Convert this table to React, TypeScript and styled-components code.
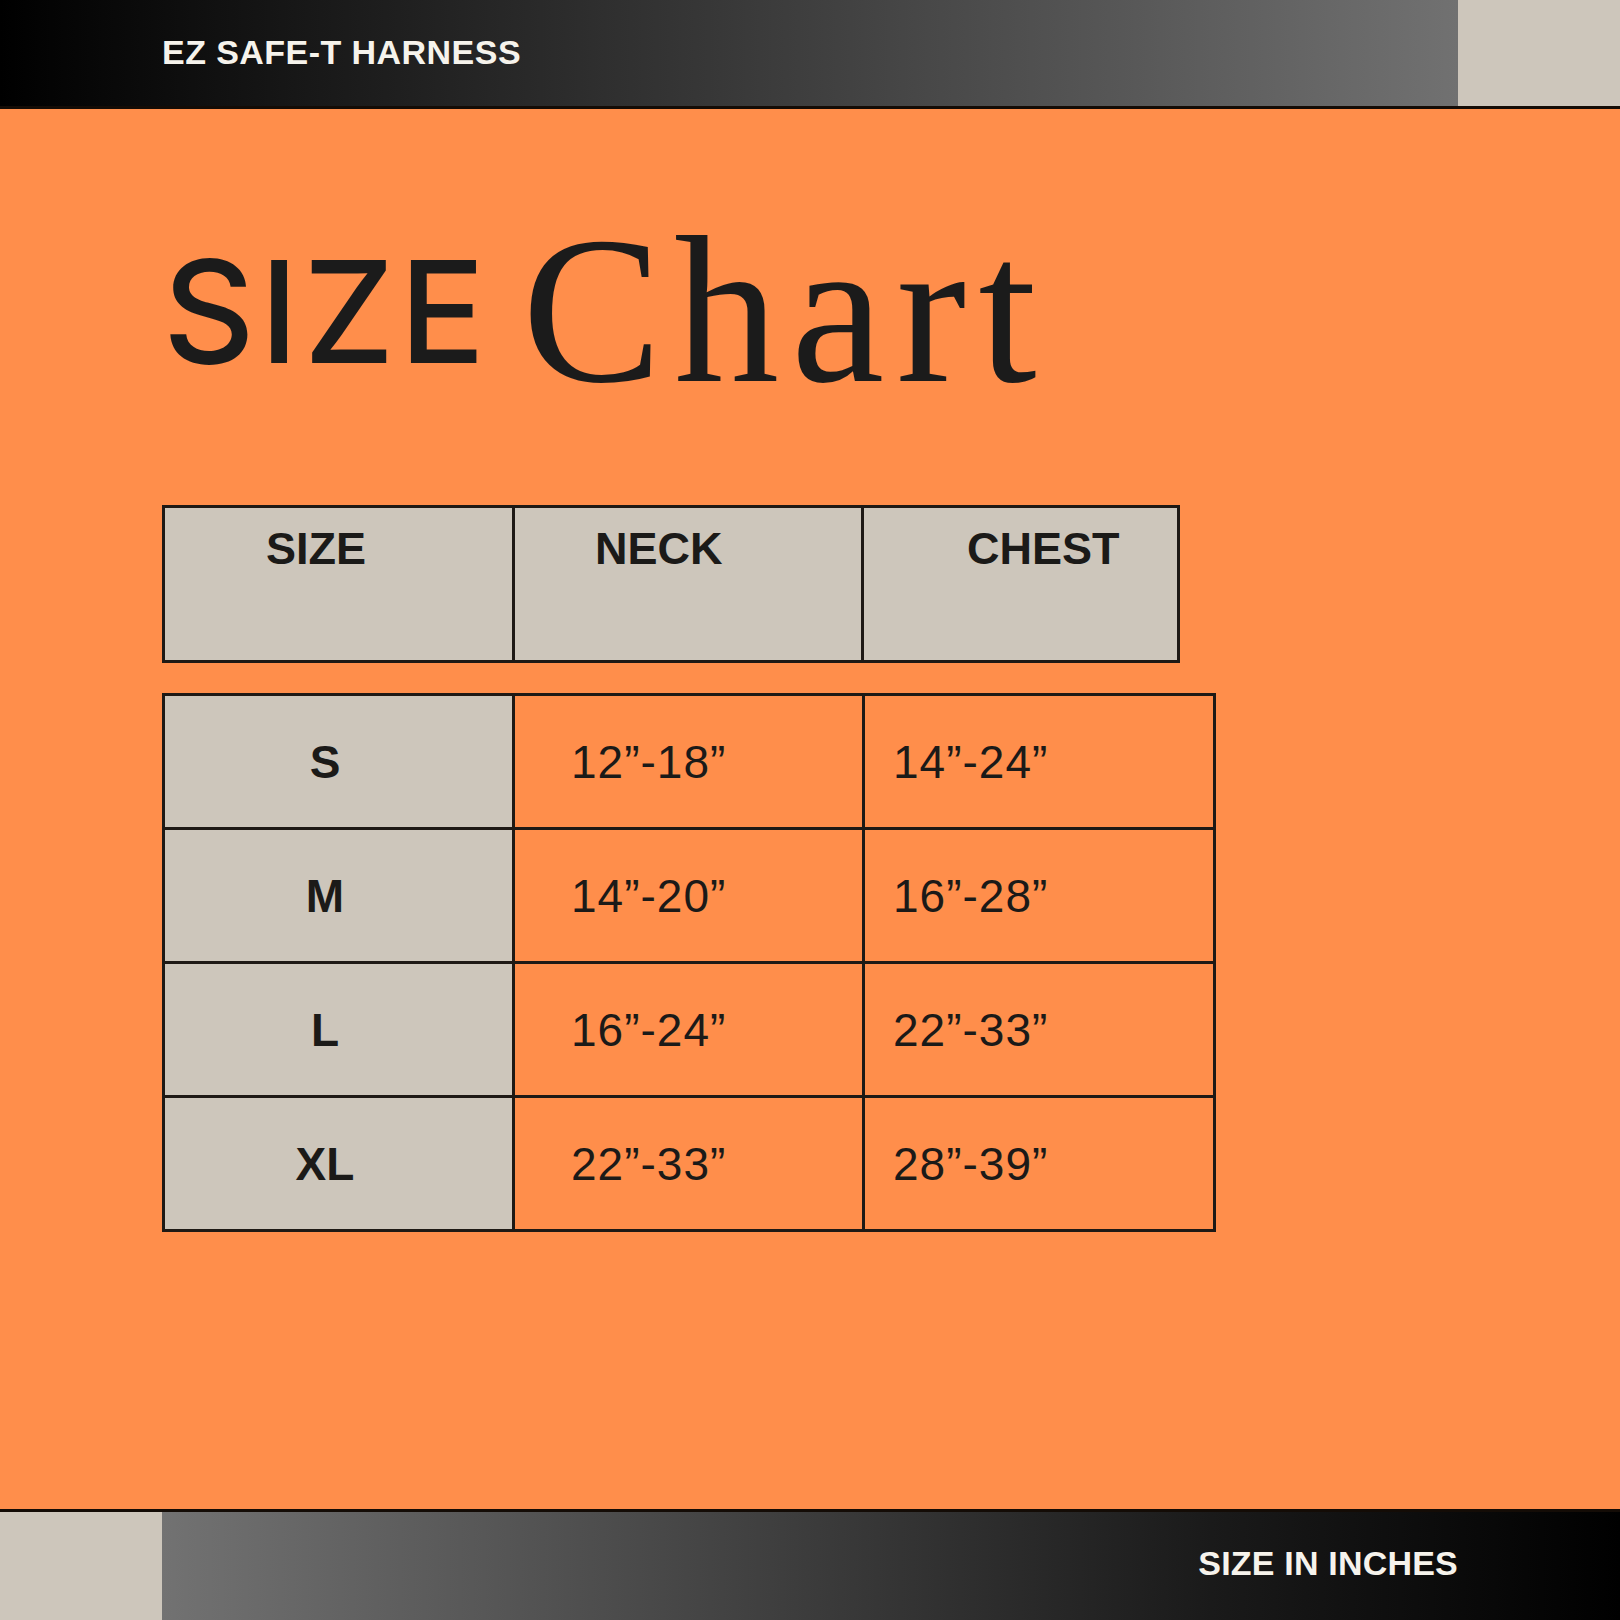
import React from "react";
import styled, { createGlobalStyle } from "styled-components";

const GlobalStyle = createGlobalStyle`
  html, body {
    margin: 0;
    padding: 0;
    background: #ff8e4b;
  }
  * { box-sizing: border-box; }
`;

const Page = styled.div`
  width: 1620px;
  height: 1620px;
  display: flex;
  flex-direction: column;
  background: #ff8e4b;
  overflow: hidden;
`;

const TopBar = styled.header`
  height: 109px;
  display: flex;
  border-bottom: 3px solid #140c06;
  flex-shrink: 0;
`;

const BottomBar = styled.footer`
  height: 111px;
  display: flex;
  border-top: 3px solid #140c06;
  flex-shrink: 0;
`;

const BarStrip = styled.div<{ $dir: "ltr" | "rtl" }>`
  flex: 1;
  display: flex;
  justify-content: ${(p) => (p.$dir === "ltr" ? "flex-start" : "flex-end")};
  padding: ${(p) => (p.$dir === "ltr" ? "35px 0 0 162px" : "34px 162px 0 0")};
  background: ${(p) =>
    p.$dir === "ltr"
      ? "linear-gradient(90deg, #000 0%, #191919 22%, #717171 100%)"
      : "linear-gradient(90deg, #727272 0%, #1a1a1a 72%, #000 100%)"};
`;

const CornerBlock = styled.div`
  width: 162px;
  flex-shrink: 0;
  background: #cdc6bb;
`;

const BarLabel = styled.span<{ $spacing: number }>`
  font-family: "Liberation Sans", Arial, sans-serif;
  font-weight: 700;
  font-size: 34px;
  line-height: 1;
  color: #f6f3ec;
  letter-spacing: ${(p) => p.$spacing}px;
`;

const Main = styled.main`
  flex: 1;
  display: flex;
  flex-direction: column;
  padding: 91px 0 0 161px;
`;

const Title = styled.h1`
  margin: 0;
  display: flex;
  align-items: flex-start;
  color: #1b1b1b;
  font-weight: 400;
  height: 222px;
`;

const TitleSans = styled.span`
  font-family: Inter, Lato, sans-serif;
  font-weight: 550;
  font-size: 142px;
  line-height: 1;
  margin-top: 40px;
  margin-left: 2px;
  letter-spacing: 5px;
`;

const TitleSerif = styled.span`
  font-family: "Liberation Serif", "Times New Roman", serif;
  font-size: 210px;
  line-height: 1;
  margin-left: 32px;
  margin-top: 5px;
  letter-spacing: 12px;
`;

const GridTable = styled.div<{ $cols: string; $top: number }>`
  display: grid;
  grid-template-columns: ${(p) => p.$cols};
  gap: 3px;
  padding: 3px;
  margin-top: ${(p) => p.$top}px;
  margin-left: 1px;
  background: #1e1915;
  width: max-content;
`;

const HeadCell = styled.div<{ $indent: number }>`
  height: 152px;
  background: #cdc6bb;
  padding: 18px 0 0 ${(p) => p.$indent}px;
  font-family: "Liberation Sans", Arial, sans-serif;
  font-weight: 700;
  font-size: 45px;
  line-height: 1;
  color: #1b1a18;
`;

const SizeCell = styled.div`
  height: 131px;
  background: #cdc6bb;
  display: flex;
  align-items: center;
  justify-content: center;
  padding-right: 27px;
  font-family: "Liberation Sans", Arial, sans-serif;
  font-weight: 700;
  font-size: 46px;
  line-height: 1;
  color: #1b1a18;
`;

const ValueCell = styled.div<{ $indent: number }>`
  height: 131px;
  background: #ff8e4b;
  display: flex;
  align-items: center;
  padding-left: ${(p) => p.$indent}px;
  font-family: "Liberation Sans", Arial, sans-serif;
  font-weight: 400;
  font-size: 46px;
  line-height: 1;
  letter-spacing: 1px;
  color: #1b1a18;
`;

const rows = [
  { size: "S", neck: "12”-18”", chest: "14”-24”" },
  { size: "M", neck: "14”-20”", chest: "16”-28”" },
  { size: "L", neck: "16”-24”", chest: "22”-33”" },
  { size: "XL", neck: "22”-33”", chest: "28”-39”" },
];

export default function App() {
  return (
    <>
      <GlobalStyle />
      <Page>
        <TopBar>
          <BarStrip $dir="ltr">
            <BarLabel $spacing={0.45}>EZ SAFE-T HARNESS</BarLabel>
          </BarStrip>
          <CornerBlock />
        </TopBar>
        <Main>
          <Title>
            <TitleSans>SIZE</TitleSans>
            <TitleSerif>Chart</TitleSerif>
          </Title>
          <GridTable $cols="347px 346px 313px" $top={83}>
            <HeadCell $indent={101}>SIZE</HeadCell>
            <HeadCell $indent={80}>NECK</HeadCell>
            <HeadCell $indent={103}>CHEST</HeadCell>
          </GridTable>
          <GridTable $cols="347px 347px 348px" $top={30}>
            {rows.map((r) => (
              <React.Fragment key={r.size}>
                <SizeCell>{r.size}</SizeCell>
                <ValueCell $indent={56}>{r.neck}</ValueCell>
                <ValueCell $indent={28}>{r.chest}</ValueCell>
              </React.Fragment>
            ))}
          </GridTable>
        </Main>
        <BottomBar>
          <CornerBlock />
          <BarStrip $dir="rtl">
            <BarLabel $spacing={0.2}>SIZE IN INCHES</BarLabel>
          </BarStrip>
        </BottomBar>
      </Page>
    </>
  );
}
